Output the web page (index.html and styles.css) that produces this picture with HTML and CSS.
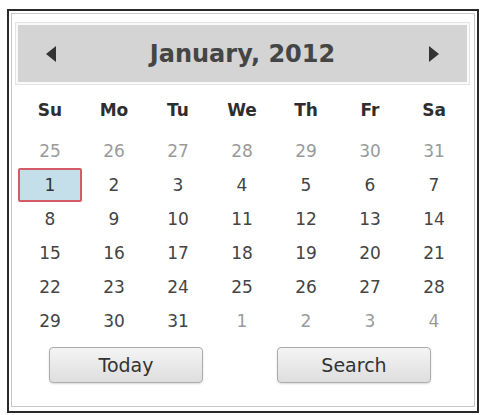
FILE: index.html
```html
<!DOCTYPE html>
<html lang="en">
<head>
    <meta charset="UTF-8">
    <meta name="viewport" content="width=device-width, initial-scale=1.0">
    <title>Date picker</title>
    <link rel="stylesheet" href="styles.css">
</head>
<body>
    <div class="frame">
        <div class="calendar">
            <div class="cal-header">
                <span class="nav">
                    <svg width="11" height="16" viewBox="0 0 11 16"><path d="M10 0 L0 8 L10 16 Z" fill="#333"/></svg>
                </span>
                <span class="title">January, 2012</span>
                <span class="nav">
                    <svg width="11" height="16" viewBox="0 0 11 16"><path d="M1 0 L11 8 L1 16 Z" fill="#333"/></svg>
                </span>
            </div>

            <div class="weekdays">
                <span>Su</span><span>Mo</span><span>Tu</span><span>We</span><span>Th</span><span>Fr</span><span>Sa</span>
            </div>

            <div class="days">
                <span class="other">25</span><span class="other">26</span><span class="other">27</span><span class="other">28</span><span class="other">29</span><span class="other">30</span><span class="other">31</span>
                <span class="selected">1</span><span>2</span><span>3</span><span>4</span><span>5</span><span>6</span><span>7</span>
                <span>8</span><span>9</span><span>10</span><span>11</span><span>12</span><span>13</span><span>14</span>
                <span>15</span><span>16</span><span>17</span><span>18</span><span>19</span><span>20</span><span>21</span>
                <span>22</span><span>23</span><span>24</span><span>25</span><span>26</span><span>27</span><span>28</span>
                <span>29</span><span>30</span><span>31</span><span class="other">1</span><span class="other">2</span><span class="other">3</span><span class="other">4</span>
            </div>

            <div class="actions">
                <button class="btn">Today</button>
                <button class="btn">Search</button>
            </div>
        </div>
    </div>
</body>
</html>
```

FILE: styles.css
```css
body {
    margin: 0;
    background: #fff;
    font-family: "DejaVu Sans", Verdana, sans-serif;
}
.frame {
    margin: 9px 6px 0 7px;
    border: 2px solid #2a2a2a;
    padding: 2px 2px 4px 2px;
}
.calendar {
    border: 1px solid #c8c8c8;
    padding: 11px 7px 23px 6px;
}
.cal-header {
    display: flex;
    align-items: center;
    justify-content: space-between;
    height: 57px;
    padding: 0 28px;
    background: #d4d4d4;
    box-shadow: 0 0 0 2px #fafafa, 0 0 0 3px #e4e4e4;
}
.nav {
    display: flex;
    align-items: center;
}
.title {
    font-size: 24px;
    font-weight: bold;
    color: #454545;
}
.weekdays,
.days {
    display: grid;
    grid-template-columns: repeat(7, 64px);
}
.weekdays {
    margin-top: 11px;
}
.weekdays span {
    height: 34px;
    line-height: 34px;
    text-align: center;
    font-size: 17px;
    font-weight: bold;
    color: #2e2e2e;
}
.days {
    margin-top: 7px;
}
.days span {
    height: 34px;
    line-height: 34px;
    text-align: center;
    font-size: 17px;
    color: #444;
}
.days .other {
    color: #9a9a9a;
}
.days .selected {
    box-sizing: border-box;
    line-height: 30px;
    background: #c4dfea;
    border: 2px solid #d45a68;
    border-radius: 2px;
    color: #333;
}
.actions {
    display: flex;
    justify-content: center;
    gap: 74px;
    margin-top: 9px;
    padding-right: 5px;
}
.btn {
    width: 154px;
    height: 36px;
    border: 1px solid #ababab;
    border-radius: 4px;
    background: linear-gradient(#f4f4f4, #dedede);
    box-shadow: 0 1px 2px rgba(0, 0, 0, 0.15);
    font-family: "DejaVu Sans", Verdana, sans-serif;
    font-size: 19px;
    color: #333;
    cursor: pointer;
}
```
